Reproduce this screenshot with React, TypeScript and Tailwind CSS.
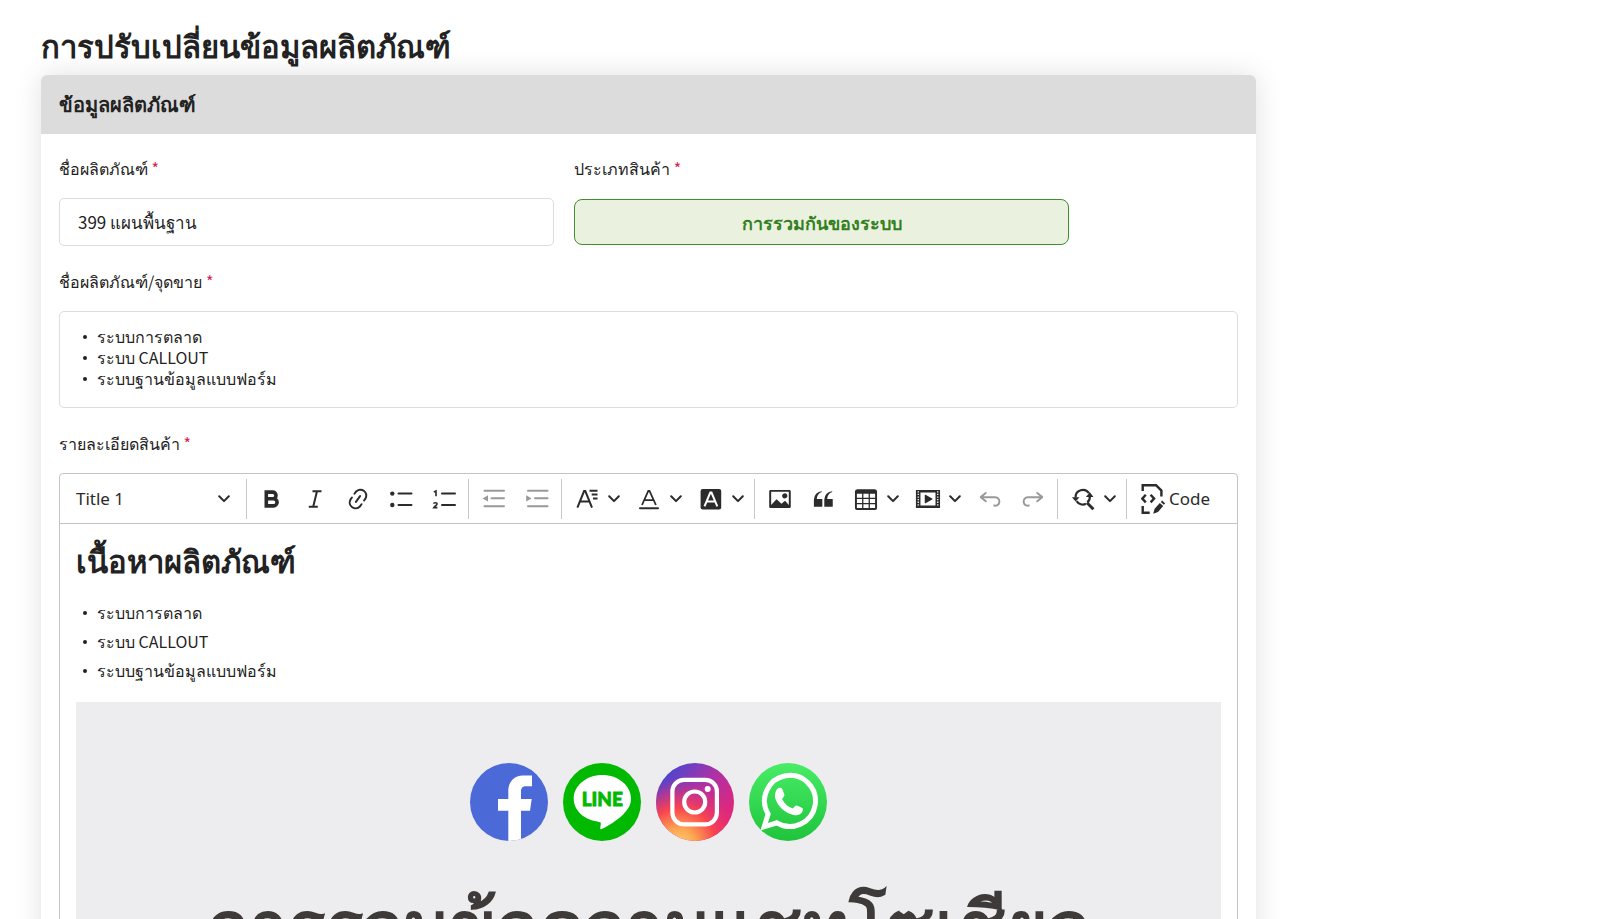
import type { ReactNode } from "react";

const ICON = "size-[26px] shrink-0";

/**
 * Field label with the red required mark
 */
const FieldLabel = ({ htmlFor, id, children }: { htmlFor?: string; id?: string; children: ReactNode }) => (
  <label htmlFor={htmlFor} id={id} className="block text-[16px] leading-6">
    {children} <span className="text-[#d6204e]">*</span>
  </label>
);

const Stroke = ({ children, width = 2 }: { children: ReactNode; width?: number }) => (
  <svg viewBox="0 0 26 26" className={ICON} fill="none" stroke="currentColor" strokeWidth={width} aria-hidden="true">
    {children}
  </svg>
);

const Solid = ({ d, flip }: { d: string; flip?: boolean }) => (
  <svg viewBox="0 0 20 20" className={ICON} fill="currentColor" aria-hidden="true">
    <path d={d} transform={flip ? "matrix(-1 0 0 1 20 0)" : undefined} />
  </svg>
);

const Chevron = () => (
  <svg viewBox="0 0 12 8" className="h-2 w-3 shrink-0" fill="none" stroke="currentColor" strokeWidth="2" strokeLinecap="round" strokeLinejoin="round" aria-hidden="true">
    <path d="M1.2 1.3 6 6.1l4.8-4.8" />
  </svg>
);

const ToolButton = ({ label, disabled, children }: { label: string; disabled?: boolean; children: ReactNode }) => (
  <button
    type="button"
    aria-label={label}
    disabled={disabled}
    className="flex h-10 w-[43px] items-center justify-center rounded-sm hover:bg-gray-100 disabled:text-[#999] disabled:hover:bg-transparent"
  >
    {children}
  </button>
);

const SplitButton = ({ label, children }: { label: string; children: ReactNode }) => (
  <button type="button" aria-label={label} aria-haspopup="true" className="flex h-10 w-[62px] items-center rounded-sm hover:bg-gray-100">
    <span className="flex w-[43px] justify-center">{children}</span>
    <Chevron />
  </button>
);

const Group = ({ children }: { children: ReactNode }) => (
  <div className="flex items-center border-l border-[#c8c8c8] px-[3px]">{children}</div>
);

const LINK =
  "m11.077 15 .991-1.416a.75.75 0 1 1 1.229.86l-1.148 1.64a.748.748 0 0 1-.217.206 5.251 5.251 0 0 1-8.503-5.955.741.741 0 0 1 .12-.274l1.147-1.639a.75.75 0 1 1 1.228.86L4.933 10.7l.006.003a3.75 3.75 0 0 0 6.132 4.294l.006.004zm5.494-5.335a.748.748 0 0 1-.12.274l-1.147 1.639a.75.75 0 1 1-1.228-.86l.86-1.23a3.75 3.75 0 0 0-6.144-4.301l-.86 1.229a.75.75 0 0 1-1.229-.86l1.148-1.64a.748.748 0 0 1 .217-.206 5.251 5.251 0 0 1 8.503 5.955zm-4.563-2.532a.75.75 0 0 1 .184 1.045l-3.155 4.505a.75.75 0 1 1-1.229-.86l3.155-4.506a.75.75 0 0 1 1.045-.184z";
const IMAGE =
  "M6.91 10.54c.26-.23.64-.21.88.03l3.36 3.14 2.23-2.06a.64.64 0 0 1 .87 0l2.52 2.97V4.5H3.2v10.12l3.71-4.08zm10.27-7.51c.6 0 1.09.47 1.09 1.05v11.84c0 .59-.49 1.06-1.09 1.06H2.79c-.6 0-1.09-.47-1.09-1.06V4.08c0-.58.49-1.05 1.1-1.05h14.38zm-5.22 5.56a1.96 1.96 0 1 1 3.4-1.96 1.96 1.96 0 0 1-3.4 1.96z";
const QUOTE =
  "M3 10.423a6.5 6.5 0 0 1 6.056-6.408l.038.67C6.448 5.423 5.354 7.663 5.22 10H9c.552 0 .5.432.5.986v4.511c0 .554-.448.503-1 .503h-5c-.552 0-.5-.449-.5-1.003v-4.574zm8 0a6.5 6.5 0 0 1 6.056-6.408l.038.67c-2.646.739-3.74 2.979-3.873 5.315H17c.552 0 .5.432.5.986v4.511c0 .554-.448.503-1 .503h-5c-.552 0-.5-.449-.5-1.003v-4.574z";
const TABLE =
  "M3 6v3h4V6H3zm0 4v3h4v-3H3zm0 4v3h4v-3H3zm5 3h4v-3H8v3zm5 0h4v-3h-4v3zm4-4v-3h-4v3h4zm0-4V6h-4v3h4zm1.5 8a1.5 1.5 0 0 1-1.5 1.5H3A1.5 1.5 0 0 1 1.5 17V4c.222-.863 1.068-1.5 2-1.5h13c.932 0 1.778.637 2 1.5v13zM12 13v-3H8v3h4zm0-4V6H8v3h4z";
const MEDIA =
  "M18.68 3.03c.6 0 .59-.03.59.55v12.84c0 .59.01.56-.59.56H1.29c-.6 0-.59.03-.59-.56V3.58c0-.58-.01-.55.6-.55h17.38zM15.77 15V5H4.2v10h11.57zM2 4v1h1V4H2zm0 2v1h1V6H2zm0 2v1h1V8H2zm0 2v1h1v-1H2zm0 2v1h1v-1H2zm0 2v1h1v-1H2zM17 4v1h1V4h-1zm0 2v1h1V6h-1zm0 2v1h1V8h-1zm0 2v1h1v-1h-1zm0 2v1h1v-1h-1zm0 2v1h1v-1h-1zM7.5 7.177a.4.4 0 0 1 .593-.351l5.133 2.824a.4.4 0 0 1 0 .7l-5.133 2.824a.4.4 0 0 1-.593-.35V7.176v.001z";
const UNDO =
  "m5.042 9.367 2.189 1.837a.75.75 0 0 1-.965 1.149l-3.788-3.18a.747.747 0 0 1-.21-.284.75.75 0 0 1 .17-.945L6.23 4.762a.75.75 0 1 1 .964 1.15L4.863 7.866h8.917A.75.75 0 0 1 14 7.9a4 4 0 1 1-1.477 7.718l.344-1.489a2.5 2.5 0 1 0 1.094-4.73l.008-.032H5.042z";

const Toolbar = () => (
  <div role="toolbar" aria-label="Editor toolbar" className="flex flex-wrap items-center border-b border-[#c4c4c4] pt-[5px] pb-1 text-[#2b2b2b]">
    <div className="relative w-[186px] font-['Noto_Sans',sans-serif]">
      <select aria-label="Heading" defaultValue="Title 1" className="h-10 w-full cursor-pointer appearance-none bg-transparent pl-4 text-[17px]">
        <option>Title 1</option>
        <option>Title 2</option>
        <option>Title 3</option>
      </select>
      <span className="pointer-events-none absolute top-4 right-4">
        <Chevron />
      </span>
    </div>
    <Group>
      <ToolButton label="Bold">
        <Stroke width={3.6}>
          <path d="M7.3 6.1h6.4a3.3 3.3 0 0 1 0 6.6H7.3zM7.3 12.7h7.2a3.6 3.6 0 0 1 0 7.2H7.3z" />
        </Stroke>
      </ToolButton>
      <ToolButton label="Italic">
        <Stroke>
          <path d="M10.5 5.2h9M6.8 20.8h9M15 5.2l-3.8 15.6" />
        </Stroke>
      </ToolButton>
      <ToolButton label="Link">
        <Solid d={LINK} />
      </ToolButton>
      <ToolButton label="Bulleted list">
        <Stroke>
          <path d="M10.5 7.5h13M10.5 19h13" strokeLinecap="round" />
          <circle cx="4.3" cy="7.6" r="2.2" fill="currentColor" stroke="none" />
          <circle cx="4.3" cy="19" r="2.2" fill="currentColor" stroke="none" />
        </Stroke>
      </ToolButton>
      <ToolButton label="Numbered list">
        <Stroke>
          <path d="M11 7.5h13M11 19h13" strokeLinecap="round" />
          <path d="M2.8 5.9 5 4.9v5.4M2.6 17.7c.2-1.3 3.7-1.3 3.4.4-.2 1.1-2.3 2.1-3.2 3.5h3.6" strokeWidth="1.6" />
        </Stroke>
      </ToolButton>
    </Group>
    <Group>
      <ToolButton label="Decrease indent" disabled>
        <Stroke>
          <path d="M3.5 4.7H23M10.5 12.3H23M3.5 20.3H23" strokeLinecap="round" />
          <path d="M1.6 12.4 7 9.2v6.4z" fill="currentColor" stroke="none" />
        </Stroke>
      </ToolButton>
      <ToolButton label="Increase indent" disabled>
        <Stroke>
          <path d="M4 4.7h19.5M11 12.3h12.5M4 20.3h19.5" strokeLinecap="round" />
          <path d="M7.6 12.4 2.2 9.2v6.4z" fill="currentColor" stroke="none" />
        </Stroke>
      </ToolButton>
    </Group>
    <Group>
      <SplitButton label="Font size">
        <Stroke>
          <path d="m3.4 21.7 6.7-16.6h1.2l6.7 16.6M5.8 15.6h9.8" />
          <path d="M15.5 4.8h8M17.7 8.6h5.8M19 12.4h4.5" />
        </Stroke>
      </SplitButton>
      <SplitButton label="Font color">
        <Stroke>
          <path d="m6 19 6.3-14h1.2l6.4 14M8.3 14.2h9.4" strokeWidth="1.8" />
          <path d="M4 22.3h18" strokeLinecap="round" />
        </Stroke>
      </SplitButton>
      <SplitButton label="Font background color">
        <Stroke>
          <rect x="2.6" y="3" width="20.6" height="20.4" rx="2" fill="currentColor" stroke="none" />
          <path d="m6.5 20.3 5.8-13.7h1.2l5.8 13.7M8.6 15.4h8.6" stroke="white" />
        </Stroke>
      </SplitButton>
    </Group>
    <Group>
      <ToolButton label="Insert image">
        <Solid d={IMAGE} />
      </ToolButton>
      <ToolButton label="Block quote">
        <Solid d={QUOTE} />
      </ToolButton>
      <SplitButton label="Insert table">
        <Solid d={TABLE} />
      </SplitButton>
      <SplitButton label="Insert media">
        <Solid d={MEDIA} />
      </SplitButton>
      <ToolButton label="Undo" disabled>
        <Solid d={UNDO} />
      </ToolButton>
      <ToolButton label="Redo" disabled>
        <Solid d={UNDO} flip />
      </ToolButton>
    </Group>
    <Group>
      <SplitButton label="Find and replace">
        <Stroke width={2.2}>
          <path d="M19 7.2A7.3 7.3 0 0 0 5.6 11.6M6.6 15.2A7.3 7.3 0 0 0 16 17.8M19.8 9.6c.3 2.5-.3 4.9-2.4 6.8" />
          <path d="m17 16.8 6.4 6.4" strokeWidth="3" />
          <path d="M1.9 11.2h7.6l-3.9 4.3zM15.9 10.9h7.6l-3.6-4.6z" fill="currentColor" stroke="none" />
        </Stroke>
      </SplitButton>
    </Group>
    <div className="flex h-10 items-center border-l border-[#c8c8c8] pl-[14px]">
      <button type="button" className="flex items-center gap-1 font-['Noto_Sans',sans-serif] text-[17px]">
        <svg viewBox="0 0 24 30" className="h-[30px] w-6" fill="none" stroke="currentColor" strokeWidth="2.4" aria-hidden="true">
          <path d="M1.7 7V1.2H15l5.4 5.4v6M1.7 22v6.8h7M4.8 10.8 1.3 14.6l3.5 3.8M9.6 10.8l3.5 3.8-3.5 3.8" />
          <path d="m12.2 29.8 1.4-5 5.2-5.8 3.4 3.1-5.2 5.8zM19.8 18l1.3-1.4 3 2.8-1.3 1.4z" fill="currentColor" stroke="none" />
        </svg>
        Code
      </button>
    </div>
  </div>
);

const SocialIcons = () => (
  <div className="flex justify-center gap-[15px]">
    <svg viewBox="0 0 78 78" className="size-[78px]" role="img" aria-label="Facebook">
      <clipPath id="fb">
        <circle cx="39" cy="39" r="39" />
      </clipPath>
      <g clipPath="url(#fb)">
        <path d="M0 0h78v78H0z" fill="#4c6ad7" />
        <path d="M38.3 78V47.7H28V36h10.3V28C38.3 18 45 12.5 53 12.5h9v10.8h-6c-3.500 0-5 1.7-5 5.2V36h10.700L60 47.700h-9V78z" fill="white" />
      </g>
    </svg>
    <svg viewBox="0 0 78 78" className="size-[78px]" role="img" aria-label="LINE">
      <circle cx="39" cy="39" r="39" fill="#00b900" />
      <path d="M39.3 12c15.9 0 28.7 10.6 28.7 23.6 0 6.2-2.8 11-7.6 15.6C54.5 57 44.5 63.500 38.6 66c-1.600.6-1.400-.5-1.300-1.400l.5-3.700c.1-1.300-.2-1.800-1.800-2C20.800 57 10.700 47.500 10.700 35.600 10.700 22.600 23.500 12 39.300 12z" fill="white" />
      <text x="39.3" y="42.5" textAnchor="middle" fontFamily="Lato, sans-serif" fontWeight="900" fontSize="19" fill="#00b900" stroke="#00b900" strokeWidth="0.8">
        LINE
      </text>
    </svg>
    <svg viewBox="0 0 78 78" className="size-[78px]" role="img" aria-label="Instagram">
      <linearGradient id="igBase" x1="0.2" y1="0.05" x2="0.9" y2="0.7">
        <stop offset="0" stopColor="#4a46cf" />
        <stop offset="0.45" stopColor="#a833a8" />
        <stop offset="1" stopColor="#e0267c" />
      </linearGradient>
      <radialGradient id="igWarm" cx="0.3" cy="1.05" r="0.85">
        <stop offset="0" stopColor="#ffd074" />
        <stop offset="0.25" stopColor="#fda552" />
        <stop offset="0.55" stopColor="#f9454f" />
        <stop offset="1" stopColor="#e0267c" stopOpacity="0" />
      </radialGradient>
      <circle cx="39" cy="39" r="39" fill="url(#igBase)" />
      <circle cx="39" cy="39" r="39" fill="url(#igWarm)" />
      <g fill="none" stroke="white" strokeWidth="4.2">
        <rect x="16.4" y="16.8" width="44.5" height="44.5" rx="11.5" />
        <circle cx="38.7" cy="39" r="10.5" />
      </g>
      <circle cx="51.7" cy="26" r="3" fill="white" />
    </svg>
    <svg viewBox="0 0 78 78" className="size-[78px]" role="img" aria-label="WhatsApp">
      <linearGradient id="wa" x1="0" y1="0" x2="0" y2="1">
        <stop offset="0" stopColor="#48ec66" />
        <stop offset="1" stopColor="#1fc43c" />
      </linearGradient>
      <circle cx="39" cy="39" r="39" fill="url(#wa)" />
      <path d="M15.200 63.800l3.900-12.800a25.500 25.500 0 1 1 8.800 8.800z" fill="none" stroke="white" strokeWidth="5" />
      <path d="M28.500 25.700c1.200-1.300 3.900-1.400 4.600.1l2.200 5.400c.4 1.200-.1 2.100-2.300 4.700 2.500 4.700 6 7.800 10.900 9.700 1.900-2.400 2.700-3.500 4-3.100l5.400 2.600c1 .5.700 1.900.2 3.200-1.100 2.800-4.700 4.400-7.900 3.900-9.600-1.700-17.300-9.200-19.400-17.200-.8-3.200.2-7.300 2.300-9.300z" fill="white" />
    </svg>
  </div>
);

const systems = ["ระบบการตลาด", "ระบบ CALLOUT", "ระบบฐานข้อมูลแบบฟอร์ม"];

const SystemList = ({ className }: { className: string }) => (
  <ul className={className}>
    {systems.map((name) => (
      <li key={name} className="flex items-center gap-[10px] pl-[7px]">
        <span className="size-1 rounded-full bg-[#222]" />
        {name}
      </li>
    ))}
  </ul>
);

export default function App() {
  return (
    <main className="min-h-screen bg-white px-[41px] pt-[25px] pb-10 font-['Noto_Sans_CJK_JP','Noto_Sans',sans-serif] text-[#222]">
      <h1 className="mb-[10px] text-[31px] leading-10 font-bold">การปรับเปลี่ยนข้อมูลผลิตภัณฑ์</h1>

      <section className="w-full max-w-[1215px] rounded-t-md bg-white shadow-[0_0_28px_rgba(0,0,0,0.12)]">
        <h2 className="rounded-t-md bg-[#dcdcdc] px-[18px] pt-[15px] pb-[17px] text-[20px] leading-[27px] font-bold">ข้อมูลผลิตภัณฑ์</h2>

        <form className="flex flex-col gap-[23px] px-[18px] pt-[22px] pb-6" onSubmit={(e) => e.preventDefault()}>
          <div className="flex gap-5">
            <div className="w-[42%]">
              <FieldLabel htmlFor="productName">ชื่อผลิตภัณฑ์</FieldLabel>
              <input
                id="productName"
                type="text"
                defaultValue="399 แผนพื้นฐาน"
                className="mt-[18px] h-12 w-full rounded-[5px] border border-[#ddd] px-[18px] text-[17px]"
              />
            </div>
            <div className="w-[42%]">
              <FieldLabel htmlFor="productType">ประเภทสินค้า</FieldLabel>
              <button
                id="productType"
                type="button"
                className="mt-[19px] h-[46px] w-full rounded-lg border border-[#3f8f2f] bg-[#eaf2df] text-[18px] font-bold text-[#34801f]"
              >
                การรวมกันของระบบ
              </button>
            </div>
          </div>

          <div>
            <FieldLabel id="salesPoints">ชื่อผลิตภัณฑ์/จุดขาย</FieldLabel>
            <div aria-labelledby="salesPoints" className="mt-[18px] rounded-[5px] border border-[#ddd] px-4 pt-[14px] pb-[18px]">
              <SystemList className="text-[16px] leading-[21px]" />
            </div>
          </div>

          <div>
            <FieldLabel id="detail">รายละเอียดสินค้า</FieldLabel>
            <div aria-labelledby="detail" className="mt-[18px] rounded-sm border border-[#c4c4c4]">
              <Toolbar />
              <div className="px-4 pt-4 pb-4">
                <h3 className="text-[31px] leading-10 font-bold">เนื้อหาผลิตภัณฑ์</h3>
                <SystemList className="mt-[18px] mb-[17px] text-[16px] leading-[29px]" />
                <div className="bg-[#ededef] pt-[61px] pb-16">
                  <SocialIcons />
                  <p className="mt-5 text-center text-[70px] leading-[120px] font-bold whitespace-nowrap text-[#3e3a39]">
                    การรวมข้อความแชทโซเชียล
                  </p>
                </div>
              </div>
            </div>
          </div>
        </form>
      </section>
    </main>
  );
}
